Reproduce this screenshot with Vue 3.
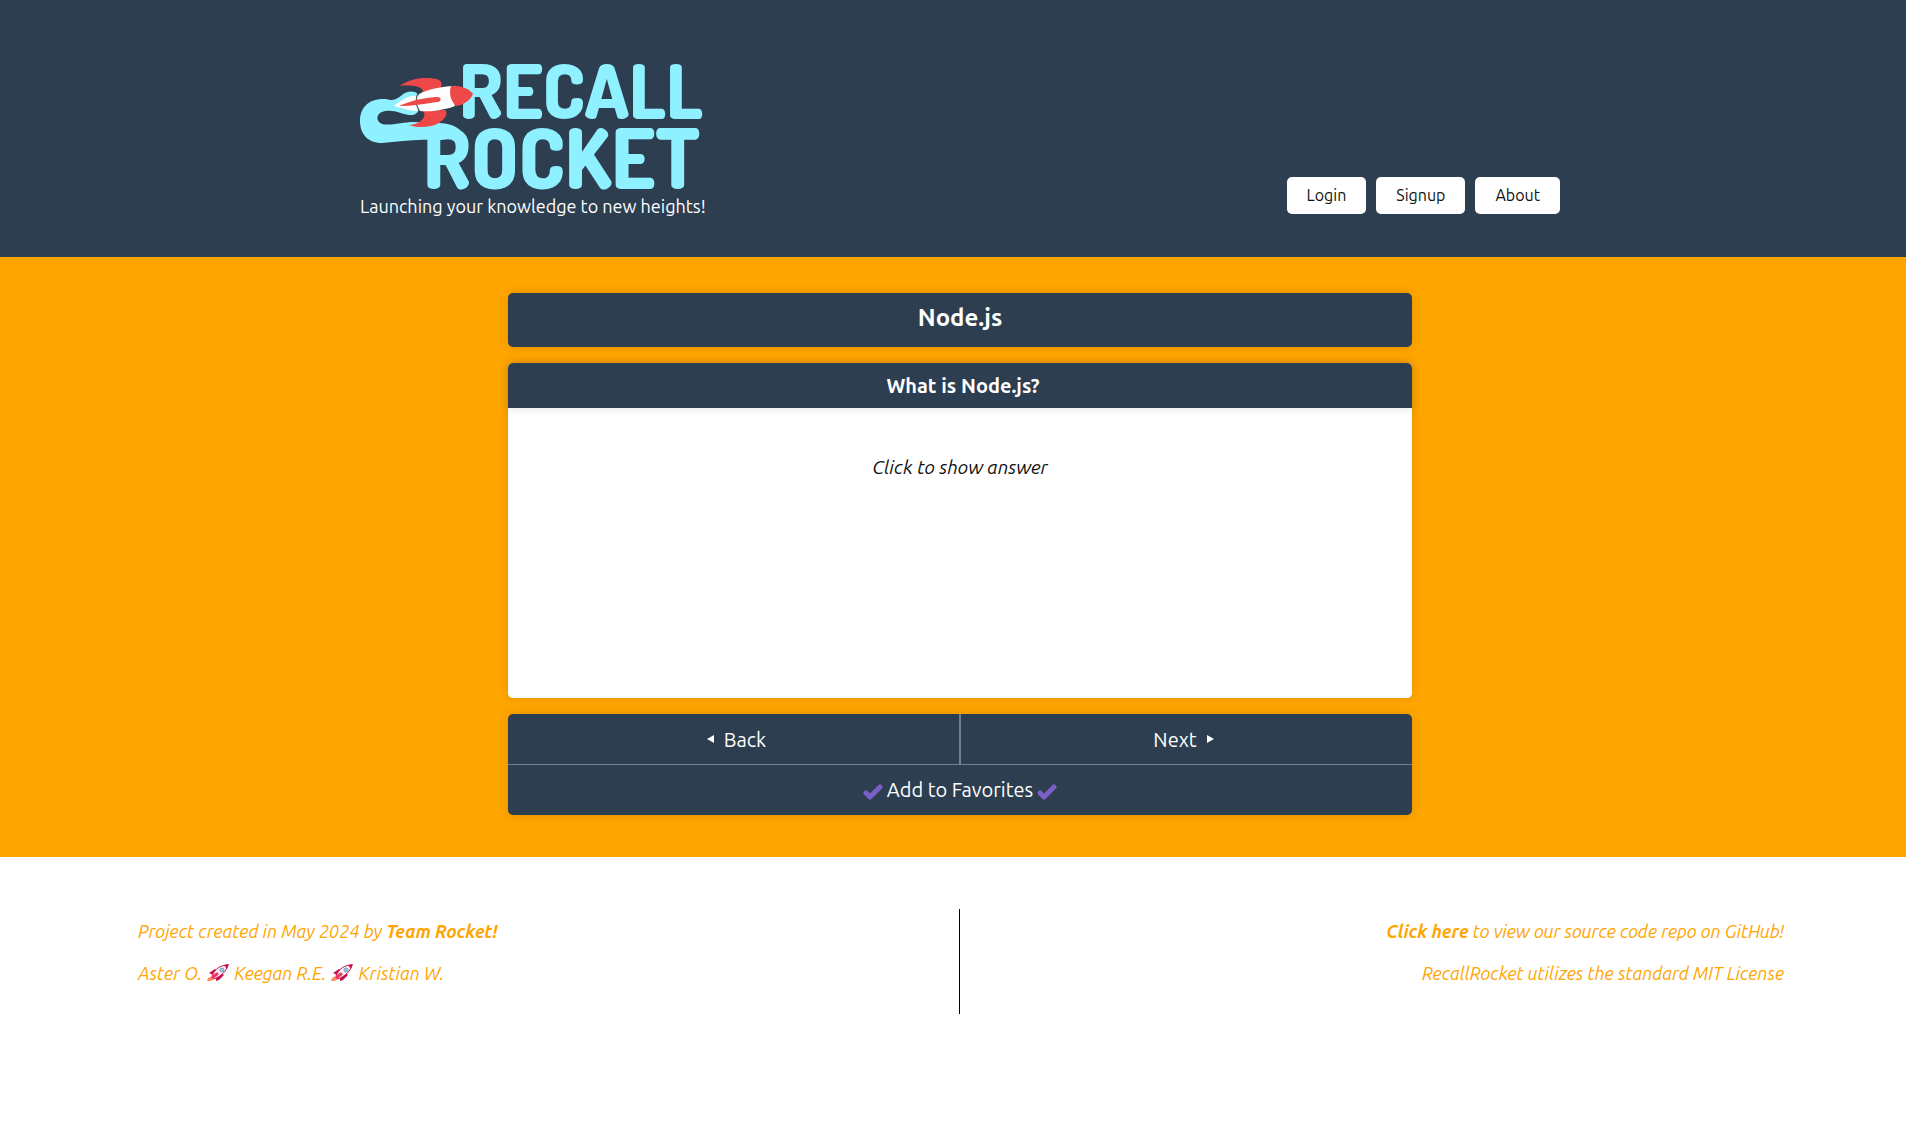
<script setup>
const navLinks = ['Login', 'Signup', 'About']
const team = ['Aster O.', 'Keegan R.E.', 'Kristian W.']
</script>

<template>
  <div class="page">
    <header class="site-header">
      <div class="header-inner">
        <a class="brand" href="#">
          <svg class="logo" viewBox="0 0 341 126" role="img" aria-label="Recall Rocket">
            <text class="word" x="99" y="55" font-size="75">RECALL</text>
            <text class="word" x="63" y="125" font-size="82">ROCKET</text>
            <path class="trail" d="M58 30 C54 26 46 27 42 31 C36 36 32 37 26 35 C8 34 0 44 0 57 C0 72 10 79 22 79 C38 78 54 75 70 76 L82 76 L92 74 C96 76 98 82 96 88 L107 83 C108 70 97 58 76 59 L54 58 C43 58 30 62 22 60 C15 57 16 48 26 47 C35 46 41 50 49 51 C56 52 60 47 58 44 Z" />
            <path fill="#fff" d="M34 42 C42 36 49 31 57 32 C55 37 56 43 58 47 C49 47 43 44 34 42 Z" />
            <path fill="#ee4848" d="M40 22 C50 14 68 12 79 16 C84 19 81 25 76 28 L60 31 C68 25 58 20 40 22 Z" />
            <path fill="#ee4848" d="M48 61 C59 61 68 53 63 47 L85 46 C90 50 82 60 71 62 C63 64 54 63 48 61 Z" />
            <path fill="#fff" d="M59 30 C69 25 80 23 91 22 L95 42 C85 46 71 48 60 47 C56 41 56 36 59 30 Z" />
            <path fill="none" stroke="#444" stroke-width="1" d="M58 29 C55 35 56 42 60 48" />
            <path fill="#ee4848" d="M91 22 C101 21 109 25 113 30 C110 37 103 41 96 42 C90 36 89 29 91 22 Z" />
            <path fill="#ee4848" d="M39 42 C50 37 62 34 76 33 C82 32 82 38 77 38 C64 40 52 42 39 42 Z" />
          </svg>
          <span class="tagline">Launching your knowledge to new heights!</span>
        </a>
        <nav class="nav">
          <button v-for="link in navLinks" :key="link" class="nav-button" type="button">{{ link }}</button>
        </nav>
      </div>
    </header>

    <main class="main">
      <div class="deck">
        <h1 class="deck-title">Node.js</h1>
        <section class="card">
          <h2 class="question">What is Node.js?</h2>
          <button class="answer" type="button">Click to show answer</button>
        </section>
        <div class="controls">
          <div class="steps">
            <button class="control back" type="button"><svg class="arrow" viewBox="0 0 7 8" aria-hidden="true"><path d="M7 0V8L0 4Z" /></svg>Back</button>
            <button class="control next" type="button">Next<svg class="arrow" viewBox="0 0 7 8" aria-hidden="true"><path d="M0 0V8L7 4Z" /></svg></button>
          </div>
          <button class="control favorite" type="button">
            <svg class="check" viewBox="0 0 20 16" aria-hidden="true"><path d="M3 9L7 13L17 3" /></svg>
            Add to Favorites
            <svg class="check" viewBox="0 0 20 16" aria-hidden="true"><path d="M3 9L7 13L17 3" /></svg>
          </button>
        </div>
      </div>
    </main>

    <footer class="site-footer">
      <div class="footer-column">
        <p>Project created in May 2024 by <strong>Team Rocket!</strong></p>
        <p class="team">
          <template v-for="(name, i) in team" :key="name">
            <svg v-if="i" class="rocket" viewBox="0 0 22 18" aria-hidden="true">
              <path fill="#ff8a5c" d="M0 17C1 13 3 12 5 13L7 15C5 17 3 17 0 17Z" />
              <path fill="#c8104e" d="M2 9L8 5L10 6L6 11ZM12 16L17 11L15 9L9 13L9 17Z" />
              <path fill="#f5f0f5" stroke="#c2185b" stroke-width="1" d="M5 12C8 5 13 1 21 1C19 8 14 12 7 15Z" />
              <path fill="#c8104e" d="M17 1L22 0L20 5Z" />
              <circle cx="15" cy="6" r="2" fill="#8cc8e8" stroke="#7f9fb5" stroke-width="1" />
              <path stroke="#f0305f" stroke-width="3" stroke-linecap="round" d="M6 13L10 10" />
            </svg>
            <span>{{ name }}</span>
          </template>
        </p>
      </div>
      <div class="footer-column footer-right">
        <p><a href="#">Click here</a> to view our source code repo on GitHub!</p>
        <p>RecallRocket utilizes the standard MIT License</p>
      </div>
    </footer>
  </div>
</template>

<style>
body {
  margin: 0;
  background: #fff;
}
</style>

<style scoped>
.page {
  font-family: Ubuntu, "Noto Sans", sans-serif;
  font-size: 16px;
  color: #111;
}

.page * {
  box-sizing: border-box;
}

button {
  border: 0;
  font-family: inherit;
  cursor: pointer;
}

.site-header {
  padding: 64px 0 38px 14px;
  background: #2c3e50;
}

.header-inner {
  display: flex;
  justify-content: space-between;
  align-items: flex-end;
  max-width: 1200px;
  margin: 0 auto;
}

.brand {
  display: flex;
  flex-direction: column;
  color: #fff;
  text-decoration: none;
}

.logo {
  display: block;
  width: 341px;
  height: 126px;
  overflow: visible;
}

.trail,
.word {
  fill: #8ff0ff;
}

.word {
  font-family: Dosis, Lato, sans-serif;
  font-weight: 800;
}

.tagline {
  padding-top: 3px;
  font-size: 18px;
  line-height: 26px;
  white-space: nowrap;
}

.nav {
  display: flex;
  gap: 10px;
  padding-bottom: 5px;
}

.nav-button {
  height: 37px;
  padding: 0 20px 2px;
  border-radius: 5px;
  background: #fff;
  color: #111;
  font-size: 16px;
}

.main {
  padding: 36px 0 42px 14px;
  background: #ffa500;
}

.deck {
  display: flex;
  flex-direction: column;
  gap: 16px;
  max-width: 904px;
  margin: 0 auto;
}

.deck-title,
.card,
.controls {
  border-radius: 5px;
  box-shadow: 0 0 10px rgba(0, 0, 0, 0.12);
}

.deck-title {
  margin: 0;
  padding: 9px 0 13px;
  background: #2c3e50;
  color: #fff;
  font-size: 24px;
  line-height: 32px;
  text-align: center;
}

.card {
  display: flex;
  flex-direction: column;
  background: #fff;
}

.question {
  z-index: 1;
  margin: 0;
  padding-left: 6px;
  border-radius: 5px 5px 0 0;
  background: #2c3e50;
  box-shadow: 0 0 10px rgba(0, 0, 0, 0.12);
  color: #fff;
  font-size: 20px;
  line-height: 45px;
  text-align: center;
}

.answer {
  min-height: 290px;
  padding: 45px 0 217px;
  border-radius: 0 0 5px 5px;
  background: #fff;
  color: #111;
  font-size: 19px;
  font-style: italic;
  line-height: 28px;
}

.controls {
  overflow: hidden;
  background: #2c3e50;
}

.steps {
  display: flex;
  border-bottom: 1px solid #708090;
}

.control {
  display: flex;
  flex: 1;
  justify-content: center;
  align-items: center;
  gap: 10px;
  height: 50px;
  padding: 0;
  background: transparent;
  color: #fff;
  font-size: 20px;
}

.back {
  padding-left: 6px;
  border-right: 2px solid #708090;
}

.next {
  padding-right: 6px;
}

.favorite {
  gap: 4px;
  width: 100%;
  padding-bottom: 1px;
}

.arrow {
  width: 7px;
  height: 8px;
  fill: #fff;
}

.check {
  width: 20px;
  height: 16px;
  margin-top: 5px;
  fill: none;
  stroke: #7a5fc7;
  stroke-width: 5px;
  stroke-linecap: round;
  stroke-linejoin: round;
}

.site-footer {
  display: flex;
  margin: 52px 122px 0 134px;
  color: #ffa500;
  font-size: 18px;
  font-style: italic;
  line-height: 26px;
}

.footer-column {
  flex: 1;
  height: 105px;
  padding: 9px 0 0 4px;
}

.footer-column p {
  margin: 0 0 16px;
}

.footer-right {
  border-left: 1px solid #000;
  text-align: right;
}

.footer-column a {
  color: inherit;
  font-weight: 700;
  text-decoration: none;
}

.team {
  display: flex;
  align-items: center;
  gap: 5px;
}

.rocket {
  width: 22px;
  height: 18px;
}
</style>
